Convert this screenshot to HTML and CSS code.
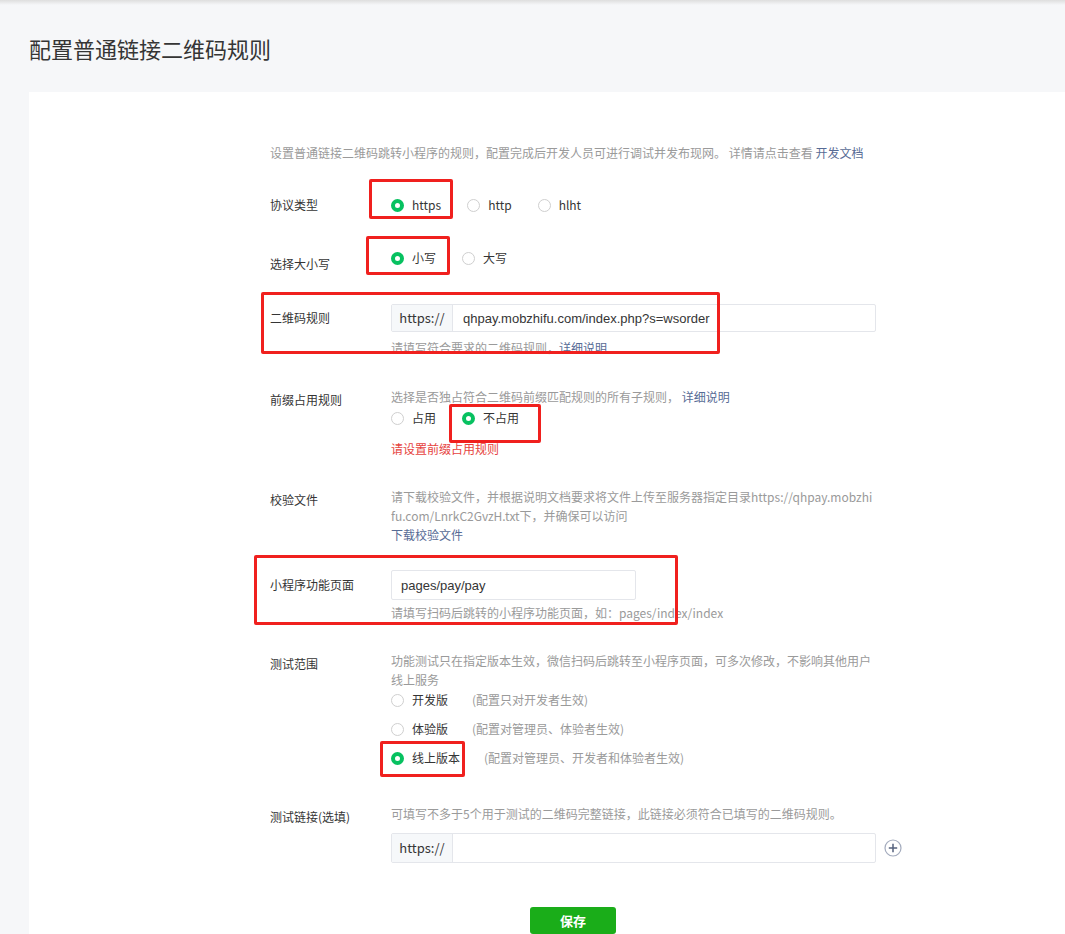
FILE: index.html
```html
<!DOCTYPE html>
<html lang="zh-CN">
<head>
    <meta charset="UTF-8">
    <meta name="viewport" content="width=device-width, initial-scale=1.0">
    <title>配置普通链接二维码规则</title>
    <link rel="stylesheet" href="styles.css">
</head>
<body>
    <div class="top-shadow"></div>

    <h2 class="page-title">配置普通链接二维码规则</h2>

    <div class="card">
        <div class="form">
            <p class="form-desc">设置普通链接二维码跳转小程序的规则，配置完成后开发人员可进行调试并发布现网。 详情请点击查看 <a href="#" class="link">开发文档</a></p>

            <!-- 协议类型 -->
            <div class="form-row row-protocol">
                <label class="form-label">协议类型</label>
                <div class="form-control">
                    <div class="radio-group">
                        <span class="radio checked"><i class="radio-dot"></i>https</span>
                        <span class="radio"><i class="radio-dot"></i>http</span>
                        <span class="radio"><i class="radio-dot"></i>hlht</span>
                    </div>
                </div>
            </div>

            <!-- 大小写 -->
            <div class="form-row row-case">
                <label class="form-label label-low">选择大小写</label>
                <div class="form-control">
                    <div class="radio-group">
                        <span class="radio checked"><i class="radio-dot"></i>小写</span>
                        <span class="radio"><i class="radio-dot"></i>大写</span>
                    </div>
                </div>
            </div>

            <!-- 二维码规则 -->
            <div class="form-row row-rule">
                <label class="form-label label-input">二维码规则</label>
                <div class="form-control">
                    <div class="input-group">
                        <span class="input-prefix">https://</span>
                        <input class="input" type="text" value="qhpay.mobzhifu.com/index.php?s=wsorder">
                    </div>
                    <p class="hint">请填写符合要求的二维码规则，<a href="#" class="link">详细说明</a></p>
                </div>
            </div>

            <!-- 前缀占用规则 -->
            <div class="form-row row-prefix">
                <label class="form-label label-text">前缀占用规则</label>
                <div class="form-control">
                    <p class="tip">选择是否独占符合二维码前缀匹配规则的所有子规则， <a href="#" class="link">详细说明</a></p>
                    <div class="radio-group prefix-radios">
                        <span class="radio"><i class="radio-dot"></i>占用</span>
                        <span class="radio checked"><i class="radio-dot"></i>不占用</span>
                    </div>
                    <p class="error">请设置前缀占用规则</p>
                </div>
            </div>

            <!-- 校验文件 -->
            <div class="form-row row-file">
                <label class="form-label label-text">校验文件</label>
                <div class="form-control">
                    <p class="tip">请下载校验文件，并根据说明文档要求将文件上传至服务器指定目录https://qhpay.mobzhifu.com/LnrkC2GvzH.txt下，并确保可以访问</p>
                    <a href="#" class="link tip-link">下载校验文件</a>
                </div>
            </div>

            <!-- 小程序功能页面 -->
            <div class="form-row row-page">
                <label class="form-label label-input-lg">小程序功能页面</label>
                <div class="form-control">
                    <input class="input input-page" type="text" value="pages/pay/pay">
                    <p class="hint hint-page">请填写扫码后跳转的小程序功能页面，如：pages/index/index</p>
                </div>
            </div>

            <!-- 测试范围 -->
            <div class="form-row row-scope">
                <label class="form-label label-text">测试范围</label>
                <div class="form-control">
                    <p class="tip">功能测试只在指定版本生效，微信扫码后跳转至小程序页面，可多次修改，不影响其他用户线上服务</p>
                    <div class="radio-list">
                        <span class="radio"><i class="radio-dot"></i>开发版<em class="radio-note">(配置只对开发者生效)</em></span>
                        <span class="radio"><i class="radio-dot"></i>体验版<em class="radio-note">(配置对管理员、体验者生效)</em></span>
                        <span class="radio checked"><i class="radio-dot"></i>线上版本<em class="radio-note">(配置对管理员、开发者和体验者生效)</em></span>
                    </div>
                </div>
            </div>

            <!-- 测试链接 -->
            <div class="form-row row-test">
                <label class="form-label label-text">测试链接(选填)</label>
                <div class="form-control">
                    <p class="tip">可填写不多于5个用于测试的二维码完整链接，此链接必须符合已填写的二维码规则。</p>
                    <div class="test-line">
                        <div class="input-group input-group-test">
                            <span class="input-prefix">https://</span>
                            <input class="input" type="text" value="">
                        </div>
                        <svg class="add-icon" width="18" height="18" viewBox="0 0 18 18">
                            <circle cx="9" cy="9" r="8" fill="none" stroke="#a3abbd" stroke-width="1.2"/>
                            <path d="M9 4.8v8.4M4.8 9h8.4" stroke="#56627e" stroke-width="1.5"/>
                        </svg>
                    </div>
                </div>
            </div>

            <div class="form-actions">
                <button class="btn-save">保存</button>
            </div>
        </div>
    </div>

    <!-- 标注框 -->
    <div class="mark mark-1"></div>
    <div class="mark mark-2"></div>
    <div class="mark mark-3"></div>
    <div class="mark mark-4"></div>
    <div class="mark mark-5"></div>
    <div class="mark mark-6"></div>
</body>
</html>
```

FILE: styles.css
```css
/* Styles généraux */
* {
    margin: 0;
    padding: 0;
    box-sizing: border-box;
}

body {
    background-color: #f6f7f9;
    font-family: "Noto Sans CJK SC", "Liberation Sans", sans-serif;
    font-size: 12px;
    color: #353535;
    min-height: 934px;
    overflow: hidden;
}

.top-shadow {
    height: 5px;
    background: linear-gradient(to bottom, #dedede, #f6f7f9);
}

.page-title {
    font-size: 22px;
    font-weight: normal;
    line-height: 30px;
    color: #353535;
    padding: 28px 0 0 29px;
}

.card {
    background-color: #fff;
    margin: 29px 0 0 29px;
    padding: 51px 0 0 241px;
    min-height: 900px;
}

.form {
    width: 606px;
}

.link {
    color: #576b95;
    text-decoration: none;
}

.form-desc {
    color: #9a9a9a;
    line-height: 20px;
}

/* Lignes du formulaire */
.form-row {
    display: grid;
    grid-template-columns: 121px 485px;
    align-items: start;
}

.form-label {
    line-height: 20px;
    color: #353535;
}

.label-low { padding-top: 6px; }
.label-text { padding-top: 3px; }
.label-input { line-height: 28px; }
.label-input-lg { line-height: 30px; }

.row-protocol { margin-top: 32px; }
.row-case { margin-top: 33px; }
.row-rule { margin-top: 30px; }
.row-prefix { margin-top: 29px; }
.row-file { margin-top: 28px; }
.row-page { margin-top: 26px; }
.row-scope { margin-top: 28px; }
.row-test { margin-top: 27px; }

.tip {
    color: #9a9a9a;
    line-height: 19px;
    word-break: break-all;
}

.tip-link {
    display: block;
    line-height: 19px;
}

.hint {
    color: #9a9a9a;
    line-height: 20px;
    margin-top: 6px;
}

.hint-page { margin-top: 3px; }

.error {
    color: #e64340;
    line-height: 20px;
    margin-top: 11px;
}

/* Boutons radio */
.radio-group {
    display: flex;
    line-height: 20px;
}

.prefix-radios { margin-top: 2px; }

.radio {
    display: inline-flex;
    align-items: center;
    margin-right: 26px;
    color: #353535;
    font-size: 12px;
    line-height: 20px;
}

.radio-dot {
    width: 13px;
    height: 13px;
    border: 1px solid #cfcfcf;
    border-radius: 50%;
    margin-right: 8px;
    background: #fff;
}

.radio.checked .radio-dot {
    border: 4px solid #07c160;
}

.radio-list {
    display: flex;
    flex-direction: column;
    align-items: flex-start;
    margin-top: 1px;
}

.radio-list .radio {
    margin-bottom: 9px;
}

.radio-note {
    font-style: normal;
    color: #9a9a9a;
    margin-left: 24px;
}

/* Champs de saisie */
.input-group {
    display: flex;
    height: 28px;
    border: 1px solid #e4e6eb;
    border-radius: 2px;
    width: 485px;
    background: #fff;
}

.input-prefix {
    width: 61px;
    flex-shrink: 0;
    background-color: #f6f8fa;
    border-right: 1px solid #e4e6eb;
    text-align: center;
    line-height: 26px;
    font-size: 13px;
    color: #353535;
}

.input {
    border: none;
    outline: none;
    flex-grow: 1;
    min-width: 0;
    padding: 0 10px;
    font-family: "Liberation Sans", "Noto Sans CJK SC", sans-serif;
    font-size: 13px;
    color: #353535;
    background: transparent;
}

.input-page {
    width: 245px;
    height: 30px;
    border: 1px solid #e4e6eb;
    border-radius: 2px;
    padding: 0 9px;
}

.test-line {
    display: flex;
    align-items: center;
    margin-top: 10px;
}

.input-group-test {
    height: 30px;
    flex-shrink: 0;
}

.input-group-test .input-prefix {
    line-height: 28px;
}

.add-icon {
    margin-left: 8px;
    flex-shrink: 0;
}

/* Bouton enregistrer */
.form-actions {
    display: flex;
    justify-content: center;
    margin-top: 44px;
}

.btn-save {
    width: 86px;
    height: 27px;
    background-color: #1aad19;
    color: #fff;
    border: none;
    border-radius: 3px;
    font-family: "Noto Sans CJK SC", sans-serif;
    font-size: 13px;
    font-weight: bold;
    cursor: pointer;
}

/* Cadres rouges d'annotation */
.mark {
    position: absolute;
    border: 3px solid #f0201e;
    border-radius: 2px;
    pointer-events: none;
}

.mark-1 { left: 369px; top: 179px; width: 84px; height: 40px; }
.mark-2 { left: 366px; top: 236px; width: 84px; height: 39px; }
.mark-3 { left: 261px; top: 292px; width: 459px; height: 62px; }
.mark-4 { left: 449px; top: 404px; width: 92px; height: 39px; }
.mark-5 { left: 254px; top: 555px; width: 424px; height: 70px; }
.mark-6 { left: 380px; top: 741px; width: 85px; height: 36px; }
```
